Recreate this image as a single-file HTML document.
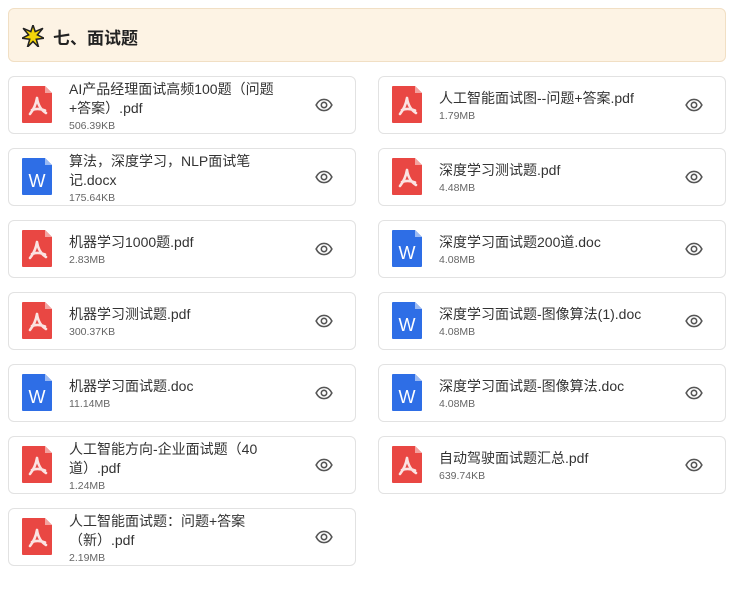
<!DOCTYPE html><html><head><meta charset="utf-8"><style>
body{margin:0;width:738px;height:594px;background:#fff;font-family:"Liberation Sans","Noto Sans CJK SC",sans-serif;position:relative;overflow:hidden}
.h{position:absolute;left:8px;top:8px;width:716px;height:52px;background:#fdf3e4;border:1px solid #f1dfc4;border-radius:6px}
.h span{position:absolute;left:44px;top:15px;font-size:17px;font-weight:bold;color:#222}
.h svg{position:absolute;left:13px;top:16px}
.c{position:absolute;width:346px;height:56px;border:1px solid #e2e2e2;border-radius:6px;background:#fff}
.ic{position:absolute;left:13px;top:9px;width:30px;height:37px}
.t{position:absolute;left:60px;font-size:14px;color:#333;line-height:19px;width:220px}
.s{position:absolute;left:60px;font-size:10.5px;color:#666}
.e{position:absolute;left:306px;top:19px}
</style></head><body>
<div class="h"><svg width="22" height="22" viewBox="0 0 20 20"><polygon points="10,0 12,6 19,3 14,9 20,12 13,13 15,20 10,15 5,20 7,13 0,12 6,9 1,3 8,6" fill="#f5d60a" stroke="#222" stroke-width="1.4"/></svg><span>七、面试题</span></div>
<svg width="0" height="0" style="position:absolute"><defs>
<symbol id="pdf" viewBox="0 0 30 37"><path d="M1 0H23L30 7V36a1 1 0 0 1-1 1H1a1 1 0 0 1-1-1V1a1 1 0 0 1 1-1Z" fill="#e94743"/><path d="M23 0V7H30Z" fill="#f3a3a0"/><path d="M15 12C14 18 12 23 8 28M15 12C16 19 19 24 24 27M10 24C14 22.5 18 22.5 23 24.5" stroke="#fbe3e2" stroke-width="2.6" fill="none" stroke-linecap="round" stroke-linejoin="round"/></symbol>
<symbol id="doc" viewBox="0 0 30 37"><path d="M1 0H23L30 7V36a1 1 0 0 1-1 1H1a1 1 0 0 1-1-1V1a1 1 0 0 1 1-1Z" fill="#2e6ee6"/><path d="M23 0V7H30Z" fill="#9bbaf3"/><text x="15" y="29" font-size="18" font-family="Liberation Sans" fill="#fff" text-anchor="middle">W</text></symbol>
<symbol id="eye" viewBox="0 0 16 16"><path d="M1 8C3 4 5.5 3 8 3s5 1 7 5c-2 4-4.5 5-7 5S3 12 1 8Z" fill="none" stroke="#555" stroke-width="1.4"/><circle cx="8" cy="8" r="2.4" fill="none" stroke="#555" stroke-width="1.4"/></symbol>
</defs></svg>

<div class="c" style="left:8px;top:76px"><svg class="ic"><use href="#pdf"/></svg><div class="t" style="top:3px">AI产品经理面试高频100题（问题+答案）.pdf</div><div class="s" style="top:43px">506.39KB</div><svg class="e" width="18" height="18"><use href="#eye"/></svg></div>
<div class="c" style="left:378px;top:76px"><svg class="ic"><use href="#pdf"/></svg><div class="t" style="top:12px">人工智能面试图--问题+答案.pdf</div><div class="s" style="top:33px">1.79MB</div><svg class="e" width="18" height="18"><use href="#eye"/></svg></div>

<div class="c" style="left:8px;top:148px"><svg class="ic"><use href="#doc"/></svg><div class="t" style="top:3px">算法，深度学习，NLP面试笔记.docx</div><div class="s" style="top:43px">175.64KB</div><svg class="e" width="18" height="18"><use href="#eye"/></svg></div>
<div class="c" style="left:378px;top:148px"><svg class="ic"><use href="#pdf"/></svg><div class="t" style="top:12px">深度学习测试题.pdf</div><div class="s" style="top:33px">4.48MB</div><svg class="e" width="18" height="18"><use href="#eye"/></svg></div>

<div class="c" style="left:8px;top:220px"><svg class="ic"><use href="#pdf"/></svg><div class="t" style="top:12px">机器学习1000题.pdf</div><div class="s" style="top:33px">2.83MB</div><svg class="e" width="18" height="18"><use href="#eye"/></svg></div>
<div class="c" style="left:378px;top:220px"><svg class="ic"><use href="#doc"/></svg><div class="t" style="top:12px">深度学习面试题200道.doc</div><div class="s" style="top:33px">4.08MB</div><svg class="e" width="18" height="18"><use href="#eye"/></svg></div>

<div class="c" style="left:8px;top:292px"><svg class="ic"><use href="#pdf"/></svg><div class="t" style="top:12px">机器学习测试题.pdf</div><div class="s" style="top:33px">300.37KB</div><svg class="e" width="18" height="18"><use href="#eye"/></svg></div>
<div class="c" style="left:378px;top:292px"><svg class="ic"><use href="#doc"/></svg><div class="t" style="top:12px;width:260px">深度学习面试题-图像算法(1).doc</div><div class="s" style="top:33px">4.08MB</div><svg class="e" width="18" height="18"><use href="#eye"/></svg></div>

<div class="c" style="left:8px;top:364px"><svg class="ic"><use href="#doc"/></svg><div class="t" style="top:12px">机器学习面试题.doc</div><div class="s" style="top:33px">11.14MB</div><svg class="e" width="18" height="18"><use href="#eye"/></svg></div>
<div class="c" style="left:378px;top:364px"><svg class="ic"><use href="#doc"/></svg><div class="t" style="top:12px;width:260px">深度学习面试题-图像算法.doc</div><div class="s" style="top:33px">4.08MB</div><svg class="e" width="18" height="18"><use href="#eye"/></svg></div>

<div class="c" style="left:8px;top:436px"><svg class="ic"><use href="#pdf"/></svg><div class="t" style="top:3px;width:210px">人工智能方向-企业面试题（40道）.pdf</div><div class="s" style="top:43px">1.24MB</div><svg class="e" width="18" height="18"><use href="#eye"/></svg></div>
<div class="c" style="left:378px;top:436px"><svg class="ic"><use href="#pdf"/></svg><div class="t" style="top:12px">自动驾驶面试题汇总.pdf</div><div class="s" style="top:33px">639.74KB</div><svg class="e" width="18" height="18"><use href="#eye"/></svg></div>

<div class="c" style="left:8px;top:508px"><svg class="ic"><use href="#pdf"/></svg><div class="t" style="top:3px;width:210px">人工智能面试题：问题+答案（新）.pdf</div><div class="s" style="top:43px">2.19MB</div><svg class="e" width="18" height="18"><use href="#eye"/></svg></div>
</body></html>
